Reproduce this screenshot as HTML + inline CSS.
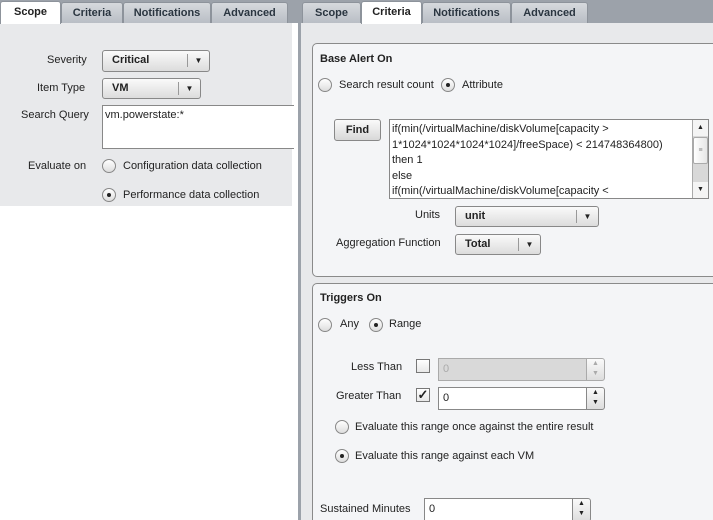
<!DOCTYPE html><html style="overflow:hidden;height:520px"><head><style>
*{box-sizing:border-box}
body{margin:0;width:713px;height:520px;background:#fff;font-family:"Liberation Sans",sans-serif;font-size:11px;color:#222;position:relative;overflow:hidden}
.a{position:absolute}
.tab{position:absolute;top:2px;height:21px;background:linear-gradient(#d6d9dd,#b9bec5);border:1px solid #8d939b;border-bottom:none;border-radius:3px 3px 0 0;font-weight:bold;text-align:center;line-height:20px;color:#2a3540}
.tab.on{background:#fff;top:1px;height:23px;color:#222}
.sel{position:absolute;height:21px;border:1px solid #888;border-radius:3px;background:linear-gradient(#fafafa,#dcdcdc);font-weight:bold;line-height:19px;padding-left:9px}
.sel i{position:absolute;right:0;top:3px;width:22px;height:13px;border-left:1px solid #999;font-style:normal;font-size:8px;text-align:center;line-height:13px}
.rad{position:absolute;width:14px;height:14px;border:1px solid #888;border-radius:50%;background:linear-gradient(#fff,#ddd)}
.rad.on::after{content:"";position:absolute;left:4px;top:4px;width:4px;height:4px;border-radius:50%;background:#222}
.inp{position:absolute;border:1px solid #888;background:#fff;padding:4px 4px;line-height:13px}
.spin{position:absolute;width:19px;border:1px solid #888;border-radius:0 3px 3px 0;background:linear-gradient(#fafafa,#ddd);font-size:7px;text-align:center;line-height:10px}
.gb{position:absolute;border:1px solid #8a8a8a;border-radius:5px;background:#f4f5f7}
.b{font-weight:bold}
</style></head><body>
<div class="a" style="left:0;top:0;width:292px;height:206px;background:#e8e9eb"></div>
<div class="a" style="left:0;top:0;width:298px;height:23px;background:#9ca2aa"></div>
<div class="tab on" style="left:0;width:61px">Scope</div>
<div class="tab" style="left:61px;width:62px">Criteria</div>
<div class="tab" style="left:123px;width:88px">Notifications</div>
<div class="tab" style="left:211px;width:77px">Advanced</div>
<div class="a" style="left:47px;top:54px">Severity</div>
<div class="sel" style="left:102px;top:50px;width:108px;height:22px">Critical<i>▼</i></div>
<div class="a" style="left:37px;top:82px">Item Type</div>
<div class="sel" style="left:102px;top:78px;width:99px;height:21px">VM<i>▼</i></div>
<div class="a" style="left:21px;top:109px">Search Query</div>
<div class="inp" style="left:102px;top:105px;width:192px;height:44px;border-right:none;padding:3px 2px">vm.powerstate:*</div>
<div class="a" style="left:28px;top:160px">Evaluate on</div>
<div class="rad" style="left:102px;top:159px"></div><div class="a" style="left:123px;top:160px">Configuration data collection</div>
<div class="rad on" style="left:102px;top:188px"></div><div class="a" style="left:123px;top:189px">Performance data collection</div>
<div class="a" style="left:298px;top:0;width:415px;height:520px;background:#e8e9eb;border-left:3px solid #9ca2aa"></div>
<div class="a" style="left:298px;top:0;width:415px;height:23px;background:#9ca2aa"></div>
<div class="tab" style="left:302px;width:59px">Scope</div>
<div class="tab on" style="left:361px;width:61px">Criteria</div>
<div class="tab" style="left:422px;width:89px">Notifications</div>
<div class="tab" style="left:511px;width:77px">Advanced</div>
<div class="gb" style="left:312px;top:43px;width:410px;height:234px"></div>
<div class="a b" style="left:320px;top:53px">Base Alert On</div>
<div class="rad" style="left:318px;top:78px"></div><div class="a" style="left:339px;top:79px">Search result count</div>
<div class="rad on" style="left:441px;top:78px"></div><div class="a" style="left:462px;top:79px">Attribute</div>
<div class="a b" style="left:334px;top:119px;width:47px;height:22px;border:1px solid #888;border-radius:3px;background:linear-gradient(#fafafa,#d8d8d8);text-align:center;line-height:20px">Find</div>
<div class="inp" style="left:389px;top:119px;width:320px;height:80px;padding:2px 2px;line-height:15.5px;overflow:hidden">if(min(/virtualMachine/diskVolume[capacity &gt;<br>1*1024*1024*1024*1024]/freeSpace) &lt; 214748364800)<br>then 1<br>else<br>if(min(/virtualMachine/diskVolume[capacity &lt;</div>
<div class="a" style="left:692px;top:120px;width:16px;height:78px;background:#d8d8d8;border-left:1px solid #aaa"></div>
<div class="a" style="left:693px;top:120px;width:15px;height:16px;background:#f4f4f4;font-size:7px;text-align:center;line-height:16px">▲</div>
<div class="a" style="left:693px;top:137px;width:15px;height:27px;background:linear-gradient(90deg,#fff,#e6e6e6);border:1px solid #aaa;border-radius:2px;font-size:7px;text-align:center;line-height:25px;color:#888">≡</div>
<div class="a" style="left:693px;top:182px;width:15px;height:16px;background:#f4f4f4;font-size:7px;text-align:center;line-height:16px">▼</div>
<div class="a" style="left:415px;top:209px">Units</div>
<div class="sel" style="left:455px;top:206px;width:144px">unit<i>▼</i></div>
<div class="a" style="left:336px;top:237px">Aggregation Function</div>
<div class="sel" style="left:455px;top:234px;width:86px">Total<i>▼</i></div>
<div class="gb" style="left:312px;top:283px;width:410px;height:245px"></div>
<div class="a b" style="left:320px;top:292px">Triggers On</div>
<div class="rad" style="left:318px;top:318px"></div><div class="a" style="left:340px;top:318px">Any</div>
<div class="rad on" style="left:369px;top:318px"></div><div class="a" style="left:389px;top:318px">Range</div>
<div class="a" style="left:351px;top:361px">Less Than</div>
<div class="a" style="left:416px;top:359px;width:14px;height:14px;border:1px solid #777;background:linear-gradient(#fff,#e8e8e8)"></div>
<div class="inp" style="left:438px;top:358px;width:149px;height:23px;background:#d9d9d9;border-color:#aaa;color:#aaa">0</div>
<div class="spin" style="left:586px;top:358px;height:23px;border-color:#aaa;color:#aaa">▲<br>▼</div>
<div class="a" style="left:336px;top:390px">Greater Than</div>
<div class="a" style="left:416px;top:388px;width:14px;height:14px;border:1px solid #777;background:linear-gradient(#fff,#e8e8e8);font-size:13px;line-height:12px;text-align:center;font-weight:bold">✓</div>
<div class="inp" style="left:438px;top:387px;width:149px;height:23px">0</div>
<div class="spin" style="left:586px;top:387px;height:23px">▲<br>▼</div>
<div class="rad" style="left:335px;top:420px"></div><div class="a" style="left:355px;top:421px">Evaluate this range once against the entire result</div>
<div class="rad on" style="left:335px;top:449px"></div><div class="a" style="left:355px;top:450px">Evaluate this range against each VM</div>
<div class="a" style="left:320px;top:503px">Sustained Minutes</div>
<div class="inp" style="left:424px;top:498px;width:149px;height:24px">0</div>
<div class="spin" style="left:572px;top:498px;height:24px">▲<br>▼</div>
</body></html>
